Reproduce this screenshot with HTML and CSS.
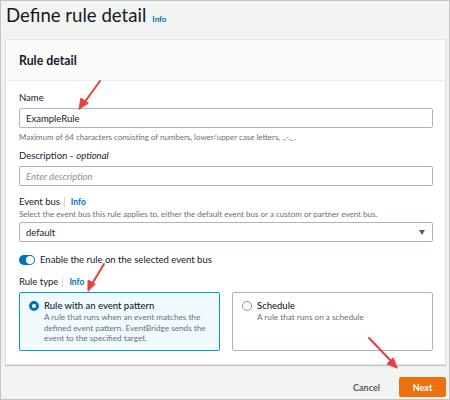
FILE: index.html
```html
<!DOCTYPE html>
<html>
<head>
<meta charset="utf-8">
<link rel="stylesheet" href="styles.css">
</head>
<body>
<div class="page">
  <div class="title-row">
    <h1 class="title">Define rule detail</h1>
    <span class="info">Info</span>
  </div>
  <div class="card">
    <div class="card-header">Rule detail</div>
    <div class="card-body">
      <div class="label l-name">Name</div>
      <div class="input"><span class="val">ExampleRule</span></div>
      <div class="hint">Maximum of 64 characters consisting of numbers, lower/upper case letters, .,-,_.</div>
      <div class="label l-desc">Description - <i>optional</i></div>
      <div class="input"><span class="ph">Enter description</span></div>
      <div class="label l-bus">Event bus <span class="sep"></span><span class="info">Info</span></div>
      <div class="hint sub">Select the event bus this rule applies to, either the default event bus or a custom or partner event bus.</div>
      <div class="input select"><span class="val">default</span><span class="caret"></span></div>
      <div class="toggle-row"><span class="toggle"><span class="knob"></span></span><span class="toggle-text">Enable the rule on the selected event bus</span></div>
      <div class="label l-type">Rule type <span class="sep"></span><span class="info">Info</span></div>
      <div class="tiles">
        <div class="tile selected">
          <span class="radio on"></span>
          <div class="tile-text">
            <div class="tile-title">Rule with an event pattern</div>
            <div class="tile-desc">A rule that runs when an event matches the defined event pattern. EventBridge sends the event to the specified target.</div>
          </div>
        </div>
        <div class="tile">
          <span class="radio"></span>
          <div class="tile-text">
            <div class="tile-title">Schedule</div>
            <div class="tile-desc">A rule that runs on a schedule</div>
          </div>
        </div>
      </div>
    </div>
  </div>
  <div class="footer">
    <span class="cancel">Cancel</span>
    <span class="next">Next</span>
  </div>
  <svg class="arrows" width="450" height="400" viewBox="0 0 450 400">
    <g stroke="#e5403c" stroke-width="2" fill="#e5403c" stroke-linecap="round">
      <line x1="100" y1="81" x2="84" y2="103"/>
      <polygon points="79,109 81,98 88,103" stroke-width="1"/>
      <line x1="104" y1="264" x2="92" y2="284"/>
      <polygon points="88,291 88,280 95,284" stroke-width="1"/>
      <line x1="369" y1="338" x2="392" y2="362"/>
      <polygon points="397,368 387,364 393,358" stroke-width="1"/>
    </g>
  </svg>
</div>
</body>
</html>
```

FILE: styles.css
```css
* { box-sizing: border-box; }
html, body { margin: 0; padding: 0; }
body {
  font-family: Lato, "Open Sans", "Liberation Sans", sans-serif;
  color: #16191f;
}
.page {
  position: relative;
  width: 450px;
  height: 400px;
  border: 1px solid #c4c4c4;
  background: #f2f3f3;
  padding: 0 3px 0 4px;
  display: flex;
  flex-direction: column;
  overflow: hidden;
}
.title-row {
  height: 38px;
  display: flex;
  align-items: baseline;
  padding-left: 1px;
  padding-top: 2px;
}
.title {
  margin: 0;
  font-size: 18.6px;
  font-weight: 400;
  line-height: 24px;
}
.info {
  color: #0073bb;
  font-weight: 700;
  font-size: 8px;
  margin-left: 6px;
}
.card {
  background: #fff;
  border: 1px solid #e3e5e5;
  box-shadow: 0 1px 1px rgba(0,22,40,0.2);
  width: 441px;
}
.card-header {
  height: 41px;
  background: #fafafa;
  border-bottom: 1px solid #eaeded;
  padding: 0 13px;
  display: flex;
  align-items: center;
  font-weight: 700;
  font-size: 12.3px;
}
.card-body {
  padding: 10px 12px 13px 13px;
  display: flex;
  flex-direction: column;
}
.label {
  font-size: 9.5px;
  line-height: 14px;
  height: 14px;
  display: flex;
  align-items: center;
}
.label i { margin-left: 3px; }
.label .sep {
  display: inline-block;
  width: 1px;
  height: 10px;
  background: #d5dbdb;
  margin: 0 3px 0 4px;
}
.label .info { font-size: 8.5px; margin-left: 3px; }
.l-name { margin-bottom: 3px; }
.l-desc { margin-top: 6px; margin-bottom: 3px; }
.l-bus { margin-top: 9px; }
.l-type { margin-top: 8px; margin-bottom: 3px; }
.input {
  height: 20px;
  border: 1px solid #aab7b8;
  border-radius: 2px;
  display: flex;
  align-items: center;
  padding: 0 6px;
  font-size: 9.5px;
  position: relative;
}
.ph { color: #879596; font-style: italic; }
.hint {
  font-size: 7.95px;
  color: #687078;
  line-height: 12px;
  height: 12px;
  margin-top: 3px;
  white-space: nowrap;
}
.hint.sub { margin-top: -1px; margin-bottom: 2px; font-size: 8.05px; }
.select { justify-content: space-between; }
.caret {
  width: 0; height: 0;
  border-left: 3.5px solid transparent;
  border-right: 3.5px solid transparent;
  border-top: 5px solid #545b64;
  margin-right: 1px;
}
.toggle-row {
  display: flex;
  align-items: center;
  margin-top: 11px;
  font-size: 9.5px;
  line-height: 14px;
  height: 14px;
}
.toggle {
  width: 16px;
  height: 10px;
  border-radius: 5px;
  background: #0073bb;
  position: relative;
  margin-right: 5px;
  flex: none;
}
.knob {
  position: absolute;
  right: 1px;
  top: 1px;
  width: 8px;
  height: 8px;
  border-radius: 50%;
  background: #fff;
}
.tiles {
  display: flex;
  gap: 12px;
}
.tile {
  flex: 1;
  height: 59px;
  border: 1px solid #aab7b8;
  border-radius: 2px;
  padding: 6px 12px 0 9px;
  display: flex;
  align-items: flex-start;
}
.tile.selected {
  background: #f1faff;
  border-color: #00a1c9;
}
.radio {
  flex: none;
  width: 10px;
  height: 10px;
  border-radius: 50%;
  border: 1px solid #879596;
  background: #fff;
  margin-top: 2px;
  margin-right: 5px;
}
.radio.on { border: 3px solid #0073bb; }
.tile-title { font-size: 9.5px; line-height: 13px; font-weight: 500; }
.tile-desc { font-size: 8.2px; line-height: 10.5px; color: #687078; }
.footer {
  display: flex;
  justify-content: flex-end;
  align-items: center;
  margin-top: 12px;
}
.cancel {
  font-weight: 700;
  font-size: 9px;
  color: #545b64;
  margin-right: 19px;
}
.next {
  width: 47px;
  height: 20px;
  background: #ec7211;
  color: #fff;
  font-weight: 700;
  font-size: 9px;
  display: flex;
  align-items: center;
  justify-content: center;
  border-radius: 2px;
}
.arrows {
  position: absolute;
  left: -1px;
  top: -1px;
  pointer-events: none;
}
```
